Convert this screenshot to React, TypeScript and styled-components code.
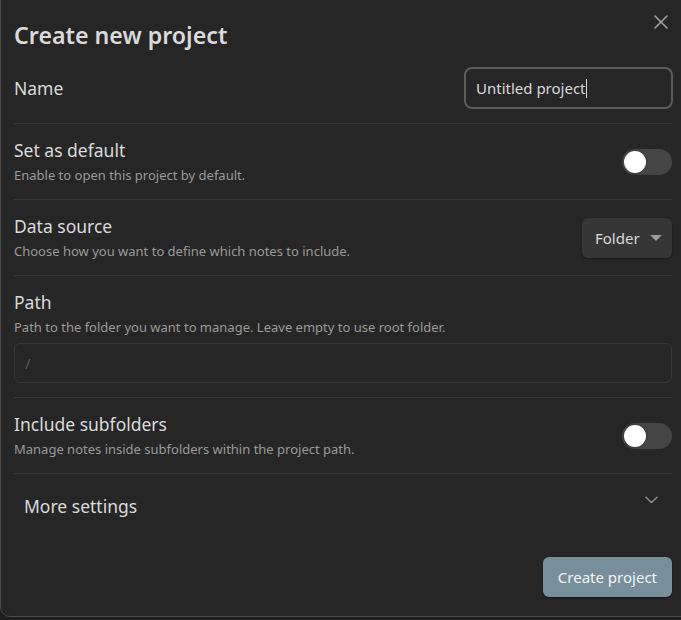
import React from "react";
import styled, { createGlobalStyle } from "styled-components";

const Global = createGlobalStyle`
  html, body { margin: 0; padding: 0; background: #1e1e1e; overflow: hidden; }
  body { font-family: "Noto Sans", "Open Sans", sans-serif; }
  * { box-sizing: border-box; }
`;

const Modal = styled.div`
  position: relative;
  width: 700px;
  height: 627px;
  margin-top: -10px;
  background: #262626;
  border: 1px solid #4a4a4a;
  border-radius: 10px;
  padding: 26px 29px 0 13px;
  display: flex;
  flex-direction: column;
  color: #dadada;
`;

const Inner = styled.div`
  width: 658px;
  display: flex;
  flex-direction: column;
`;

const Title = styled.h1`
  margin: 0;
  font-size: 23.2px;
  line-height: 36px;
  font-weight: 600;
  color: #dadada;
`;

const CloseButton = styled.button`
  position: absolute;
  top: 20px;
  right: 27px;
  width: 22px;
  height: 22px;
  padding: 0;
  border: none;
  background: transparent;
  display: flex;
  align-items: center;
  justify-content: center;
  color: #a0a0a0;
`;

const Row = styled.div<{ $border?: boolean }>`
  display: flex;
  align-items: center;
  justify-content: space-between;
  padding: 14px 0;
  border-top: ${(p) => (p.$border ? "1px solid #363636" : "none")};
`;

const Stack = styled.div`
  display: flex;
  flex-direction: column;
  padding: 14px 0;
  border-top: 1px solid #363636;
`;

const Info = styled.div`
  display: flex;
  flex-direction: column;
  gap: 3px;
`;

const Label = styled.div`
  font-size: 17.5px;
  line-height: 24px;
  color: #dadada;
`;

const Desc = styled.div`
  font-size: 13px;
  line-height: 20px;
  color: #9a9a9a;
`;

const NameInput = styled.div`
  width: 209px;
  height: 42px;
  margin-right: -1px;
  border: 2px solid #5c5c5c;
  border-radius: 8px;
  display: flex;
  align-items: center;
  padding: 0 10px;
  font-size: 15px;
  color: #dadada;
`;

const Caret = styled.span`
  display: inline-block;
  width: 1px;
  height: 19px;
  background: #dadada;
`;

const PathInput = styled.div`
  margin-top: 6px;
  height: 40px;
  border: 1px solid #363636;
  border-radius: 6px;
  display: flex;
  align-items: center;
  padding: 0 10px;
  font-size: 15px;
  color: #5a5a5a;
`;

const Toggle = styled.div`
  width: 50px;
  height: 26px;
  border-radius: 13px;
  background: #454545;
  padding: 2px;
  display: flex;
  align-items: center;
`;

const Knob = styled.div`
  width: 22px;
  height: 22px;
  border-radius: 50%;
  background: #ffffff;
  box-shadow: 0 0 2px rgba(0, 0, 0, 0.4);
`;

const Dropdown = styled.div`
  width: 90px;
  height: 40px;
  border-radius: 6px;
  background: #363636;
  box-shadow: 0 1px 2px rgba(0, 0, 0, 0.35);
  display: flex;
  align-items: center;
  justify-content: space-between;
  padding: 0 10px 0 13px;
  font-size: 15px;
  color: #dadada;
`;

const Triangle = styled.span`
  width: 0;
  height: 0;
  border-left: 6px solid transparent;
  border-right: 6px solid transparent;
  border-top: 6px solid #9a9a9a;
  margin-top: 1px;
`;

const MoreRow = styled.div`
  display: flex;
  align-items: center;
  justify-content: space-between;
  border-top: 1px solid #363636;
  padding: 19px 14px 20px 10px;
  font-size: 17.5px;
  line-height: 26px;
  color: #dadada;
`;

const Chevron = styled.span`
  display: flex;
  margin-top: -12px;
  color: #8a8a8a;
`;

const Footer = styled.div`
  display: flex;
  justify-content: flex-end;
  margin-top: 18px;
`;

const PrimaryButton = styled.button`
  height: 40px;
  padding: 0 15px;
  border: none;
  border-radius: 6px;
  background: #778f9b;
  color: #f4f4f4;
  font-family: inherit;
  font-size: 15px;
  box-shadow: 0 1px 2px rgba(0, 0, 0, 0.4);
`;

export default function App() {
  return (
    <>
      <Global />
      <Modal>
        <CloseButton aria-label="Close">
          <svg width="14" height="14" viewBox="0 0 14 14" fill="none" stroke="currentColor" strokeWidth="1.6" strokeLinecap="round">
            <path d="M1 1L13 13M13 1L1 13" />
          </svg>
        </CloseButton>
        <Inner>
          <Title>Create new project</Title>
          <Row>
            <Label>Name</Label>
            <NameInput>
              Untitled project<Caret />
            </NameInput>
          </Row>
          <Row $border>
            <Info>
              <Label>Set as default</Label>
              <Desc>Enable to open this project by default.</Desc>
            </Info>
            <Toggle><Knob /></Toggle>
          </Row>
          <Row $border>
            <Info>
              <Label>Data source</Label>
              <Desc>Choose how you want to define which notes to include.</Desc>
            </Info>
            <Dropdown>
              Folder
              <Triangle />
            </Dropdown>
          </Row>
          <Stack>
            <Info>
              <Label>Path</Label>
              <Desc>Path to the folder you want to manage. Leave empty to use root folder.</Desc>
            </Info>
            <PathInput>/</PathInput>
          </Stack>
          <Row $border>
            <Info>
              <Label>Include subfolders</Label>
              <Desc>Manage notes inside subfolders within the project path.</Desc>
            </Info>
            <Toggle><Knob /></Toggle>
          </Row>
          <MoreRow>
            More settings
            <Chevron>
              <svg width="13" height="8" viewBox="0 0 13 8" fill="none" stroke="currentColor" strokeWidth="1.5" strokeLinecap="round" strokeLinejoin="round">
                <path d="M1 1.2L6.5 6.5L12 1.2" />
              </svg>
            </Chevron>
          </MoreRow>
          <Footer>
            <PrimaryButton>Create project</PrimaryButton>
          </Footer>
        </Inner>
      </Modal>
    </>
  );
}
